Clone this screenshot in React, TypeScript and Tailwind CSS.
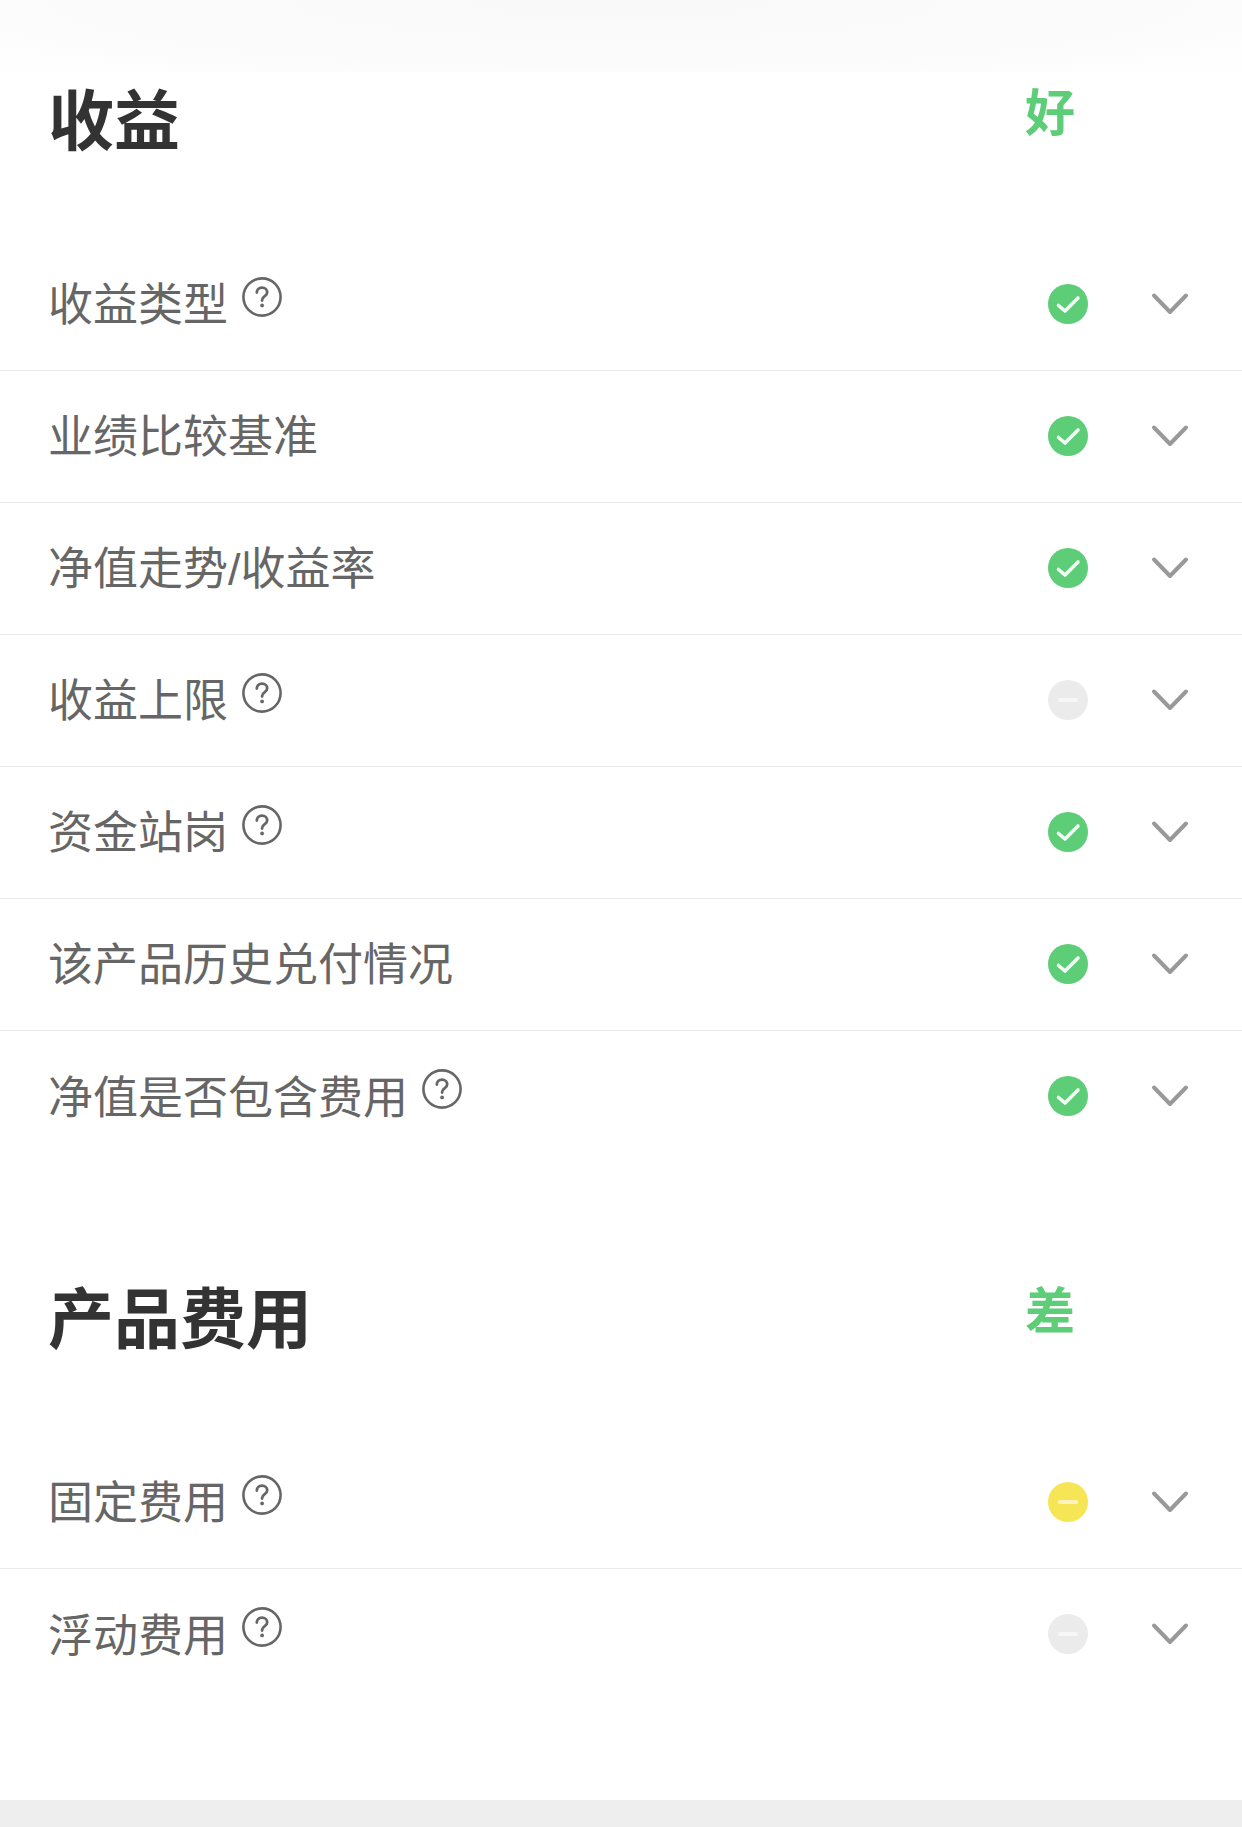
import React from "react";

type Status = "good" | "warn" | "none";

interface RowItem {
    label: string;
    status: Status;
    help?: boolean;
}

const incomeRows: RowItem[] = [
    { label: "收益类型", status: "good", help: true },
    { label: "业绩比较基准", status: "good" },
    { label: "净值走势/收益率", status: "good" },
    { label: "收益上限", status: "none", help: true },
    { label: "资金站岗", status: "good", help: true },
    { label: "该产品历史兑付情况", status: "good" },
    { label: "净值是否包含费用", status: "good", help: true },
];

const feeRows: RowItem[] = [
    { label: "固定费用", status: "warn", help: true },
    { label: "浮动费用", status: "none", help: true },
];

const HelpIcon = () => (
    <svg width="40" height="40" viewBox="0 0 40 40" fill="none" className="ml-[14px] mb-[14px] shrink-0">
        <circle cx="20" cy="20" r="18.6" stroke="#666666" strokeWidth="2.6" />
        <path
            d="M14.8 15.6c0-3 2.2-5 5.2-5s5.2 2 5.2 4.6c0 2-1.1 3-2.7 4.1-1.5 1-2.4 1.9-2.4 3.6v.6"
            stroke="#666666"
            strokeWidth="2.8"
            strokeLinecap="round"
        />
        <circle cx="20.1" cy="28.4" r="1.9" fill="#666666" />
    </svg>
);

const StatusIcon = ({ status }: { status: Status }) => {
    if (status === "good") {
        return (
            <svg width="40" height="40" viewBox="0 0 40 40" fill="none" className="shrink-0">
                <circle cx="20" cy="20" r="20" fill="#5ecd77" />
                <path
                    d="M10.5 21.5l6.5 5.5L30 14"
                    stroke="#ffffff"
                    strokeWidth="3.6"
                    strokeLinecap="round"
                    strokeLinejoin="round"
                    opacity="0.92"
                />
            </svg>
        );
    }
    return (
        <div
            className={`w-10 h-10 rounded-full flex items-center justify-center shrink-0 ${
                status === "warn" ? "bg-[#f6e655]" : "bg-[#ebebeb]"
            }`}
        >
            <div className="w-5 h-[4px] rounded-full bg-white opacity-60" />
        </div>
    );
};

const Chevron = () => (
    <svg width="38" height="24" viewBox="0 0 38 24" fill="none" className="shrink-0">
        <path
            d="M3 3.5l16 16.5L35 3.5"
            stroke="#999999"
            strokeWidth="4"
            strokeLinecap="round"
            strokeLinejoin="round"
        />
    </svg>
);

const Row = ({ item, last }: { item: RowItem; last: boolean }) => (
    <div className={`h-[132px] pl-[48px] pb-[2px] flex items-center ${last ? "" : "border-b border-[#e9e9ee]"}`}>
        <span className="text-[45px] leading-none text-[#666666] pt-[4px]">{item.label}</span>
        {item.help && <HelpIcon />}
        <div className="ml-auto pr-[53px] flex items-center">
            <StatusIcon status={item.status} />
            <div className="w-[63px]" />
            <Chevron />
        </div>
    </div>
);

const Section = ({ title, grade, rows }: { title: string; grade: string; rows: RowItem[] }) => (
    <section>
        <div className="h-[167px] pl-[48px] pr-[167px] pb-[68px] flex items-center justify-between">
            <h2 className="text-[66px] leading-none font-bold text-[#333333]">{title}</h2>
            <span className="text-[50px] leading-none font-bold text-[#5ecd77] mb-[16px]">{grade}</span>
        </div>
        {rows.map((item, i) => (
            <Row key={item.label} item={item} last={i === rows.length - 1} />
        ))}
    </section>
);

export default function App() {
    return (
        <div className="w-[1242px] h-[1827px] bg-white overflow-hidden flex flex-col font-['Liberation_Sans','Noto_Sans_CJK_SC',sans-serif]">
            {/* 顶部阴影 */}
            <div className="h-[72px] shrink-0 bg-[#fefefe] bg-[radial-gradient(ellipse_62%_130%_at_50%_0%,#f9f9f9_0%,#fbfbfb_70%,#fefefe_100%)]" />
            <Section title="收益" grade="好" rows={incomeRows} />
            <div className="h-[107px] shrink-0" />
            <Section title="产品费用" grade="差" rows={feeRows} />
            <div className="flex-1" />
            <div className="h-[27px] shrink-0 bg-[#eeeeee]" />
        </div>
    );
}
